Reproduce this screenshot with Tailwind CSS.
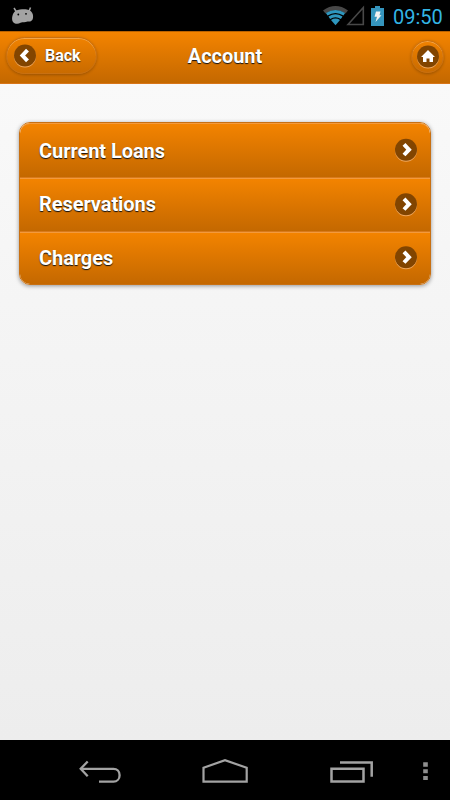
<!DOCTYPE html>
<html lang="en">
<head>
<meta charset="utf-8">
<meta name="viewport" content="width=device-width, initial-scale=1">
<title>Account</title>
<script src="https://cdn.jsdelivr.net/npm/@tailwindcss/browser@4"></script>
</head>
<body class="w-[450px] h-[800px] overflow-hidden flex flex-col bg-black font-[Roboto,sans-serif]">
  <div class="h-[31px] shrink-0 flex items-center justify-between pl-[11px] pr-[6px]">
    <svg class="w-[23px] h-[19px]" viewBox="0 0 23 19">
      <path d="M3 2l2.500 4M19.500 1.500l-1.500 4" stroke="#a3a3a3" stroke-width="1.500" fill="none"/>
      <path d="M5 4.500C9 3.200 15 2.800 18 4C21.500 5.500 22.500 9 22 12C21.500 15 19 16 16.500 15.500C14 16.300 12 16 9.500 16.800C7 18.500 3 18 1.700 15.500C.3 12.500 1.500 6.500 5 4.500z" fill="#a3a3a3"/>
      <circle cx="7.300" cy="8.500" r=".9" fill="#000"/><circle cx="15" cy="7.800" r=".9" fill="#000"/>
    </svg>
    <div class="flex items-center">
      <svg class="w-[54px] h-[21px] mr-[6px]" viewBox="0 0 54 21">
        <path d="M0 5.500Q12.500-3.300 25 5.500L22.500 8.500Q12.500 1.800 2.500 8.500z" fill="#484848"/>
        <g fill="none" stroke="#2e97bf" stroke-width="3">
          <path d="M3.700 9.300Q12.500 3.700 21.300 9.300"/>
          <path d="M6.300 12.700Q12.500 8.800 18.700 12.700"/>
        </g>
        <path d="M8 14.900Q12.500 12.300 17 14.900L12.500 20.300z" fill="#2e97bf"/>
        <path d="M25 19.500L40.300 2.500V19.500z" fill="none" stroke="#484848" stroke-width="1.600"/>
      </svg>
      <svg class="w-[13px] h-[20px] -ml-[12px] mr-[9px]" viewBox="0 0 13 20">
        <path d="M4 0h5v2h4v18H0V2h4z" fill="#3595bd"/>
        <path d="M5 5.500h4.500l-1 3.700h2L4.500 16l1.500-5.200H3.500z" fill="#f2f2f2"/>
      </svg>
      <span class="text-[20px] leading-[24px] text-[#33b5e5] w-[51px] whitespace-nowrap mt-[2px]">09:50</span>
    </div>
  </div>

  <header class="h-[53px] shrink-0 border-t border-b border-t-[#b96200] border-b-[#d87518] bg-linear-to-b from-[#f48400] to-[#c46800] grid grid-cols-[1fr_auto_1fr] items-start pl-[6px] pr-[6px] text-white">
    <div class="w-[91px] h-[37px] mt-[5px] rounded-full border border-[#c87012] bg-linear-to-b from-[#f08200] to-[#c96b00] shadow-[inset_0_1px_0_rgba(255,255,255,.28),0_1px_3px_rgba(0,0,0,.25)] flex items-center pl-[7px]">
      <svg class="w-[22px] h-[24px] mr-[9px]" viewBox="0 0 22 24">
        <circle cx="11" cy="12.500" r="11" fill="#f0a85e"/>
        <circle cx="11" cy="11.500" r="11" fill="#824500"/>
        <path d="M13.500 6.200L8.500 11.500L13.500 16.800" fill="none" stroke="#fff" stroke-width="4"/>
      </svg>
      <span class="text-[16px] leading-[20px] font-bold [text-shadow:0_1px_1px_#222] mt-px">Back</span>
    </div>
    <h1 class="mt-[12px] text-[20px] leading-[24px] tracking-[-0.07px] font-bold [text-shadow:0_1px_1px_#111]">Account</h1>
    <div class="justify-self-end mt-[8px] w-[33px] h-[33px] rounded-full border border-[#c87012] bg-linear-to-b from-[#f08200] to-[#c96b00] shadow-[inset_0_1px_0_rgba(255,255,255,.28),0_1px_3px_rgba(0,0,0,.25)] flex items-center justify-center">
      <svg class="w-[22px] h-[24px]" viewBox="0 0 22 24">
        <circle cx="11" cy="12.500" r="11" fill="#f0a85e"/>
        <circle cx="11" cy="11.500" r="11" fill="#824500"/>
        <path d="M11 5L18 12H16V17H12.500V13.500H9.500V17H6V12H4z" fill="#fff"/>
      </svg>
    </div>
  </header>

  <main class="h-[656px] shrink-0 bg-linear-to-b from-[#f9f9f9] to-[#ededed] px-[19px] pt-[38px]">
    <ul class="h-[163px] rounded-[11px] overflow-hidden border border-[#c87012] shadow-[0_1px_4px_rgba(0,0,0,.4)] text-white text-[20px] leading-[24px] tracking-[-0.07px] font-bold [text-shadow:0_1px_1px_#111] flex flex-col">
      <li class="h-[54px] shrink-0 rounded-t-[10px] bg-linear-to-b from-[#f48400] to-[#c46800] shadow-[inset_0_1px_0_#f39a3d] flex items-center justify-between pl-[19px] pr-[13px]">
        <span class="mt-px">Current Loans</span>
        <svg class="w-[23px] h-[24px]" viewBox="0 0 23 24"><circle cx="12" cy="12.700" r="11" fill="#f0a85e"/><circle cx="12" cy="11.700" r="11" fill="#824500"/><path d="M10 6.400L15 11.700L10 17" fill="none" stroke="#fff" stroke-width="4"/></svg>
      </li>
      <li class="h-[54px] shrink-0 border-t border-[#d87a1c] bg-linear-to-b from-[#f48400] to-[#c46800] shadow-[inset_0_1px_0_#f39a3d] flex items-center justify-between pl-[19px] pr-[13px]">
        <span class="-mt-px">Reservations</span>
        <svg class="w-[23px] h-[24px]" viewBox="0 0 23 24"><circle cx="12" cy="12.200" r="11" fill="#f0a85e"/><circle cx="12" cy="11.200" r="11" fill="#824500"/><path d="M10 5.900L15 11.200L10 16.500" fill="none" stroke="#fff" stroke-width="4"/></svg>
      </li>
      <li class="h-[53px] shrink-0 border-t border-[#d87a1c] bg-linear-to-b from-[#f48400] to-[#c46800] shadow-[inset_0_1px_0_#f39a3d] flex items-center justify-between pl-[19px] pr-[13px]">
        <span>Charges</span>
        <svg class="w-[23px] h-[24px]" viewBox="0 0 23 24"><circle cx="12" cy="12.200" r="11" fill="#f0a85e"/><circle cx="12" cy="11.200" r="11" fill="#824500"/><path d="M10 5.900L15 11.200L10 16.500" fill="none" stroke="#fff" stroke-width="4"/></svg>
      </li>
    </ul>
  </main>

  <nav class="h-[60px] shrink-0 flex items-start pt-[18px] pl-[79px]">
    <svg class="w-[43px] h-[26px] mr-[80px]" viewBox="0 0 43 26" fill="none" stroke="#a3a3a3" stroke-width="2.300">
      <path d="M2 10.800H34.500C38 10.800 40.600 13.500 40.600 17.200S38 23.700 34.500 23.700H20"/>
      <path d="M8.700 3.500L1.700 10.800L8.700 18.200"/>
    </svg>
    <svg class="w-[46px] h-[26px] mr-[82px]" viewBox="0 0 46 26" fill="none" stroke="#a3a3a3" stroke-width="2.200">
      <path d="M1.500 9.800L23 2.200L44.700 9.800V23.700H1.500z"/>
    </svg>
    <svg class="w-[44px] h-[26px] mr-[49px]" viewBox="0 0 44 26" fill="none" stroke="#a3a3a3" stroke-width="2.500">
      <path d="M1.500 10.800H33.500V23.500H1.500z"/>
      <path d="M10 4.500H41.700V18.800"/>
    </svg>
    <svg class="w-[6px] h-[26px]" viewBox="0 0 6 26" fill="#8f8f8f">
      <path d="M.2 4.300h4.600v4.400H.2zM.2 11.300h4.600v4H.2zM.2 18h4.600v4H.2z"/>
    </svg>
  </nav>
</body>
</html>
